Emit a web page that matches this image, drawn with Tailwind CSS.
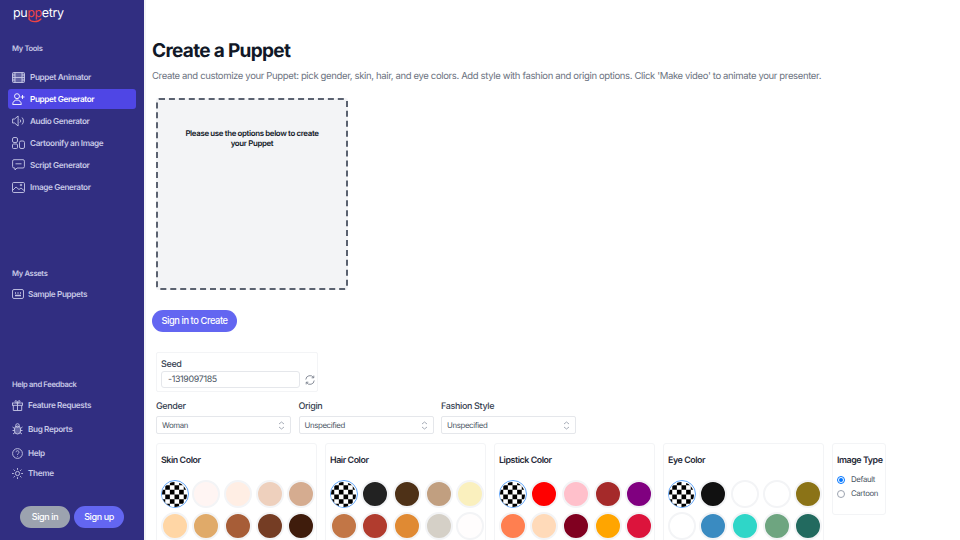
<!DOCTYPE html>
<html><head><meta charset="utf-8"><script src="https://cdn.jsdelivr.net/npm/@tailwindcss/browser@4"></script></head>
<body class="m-0 bg-white">
<div class="w-[960px] h-[540px] overflow-hidden flex font-['Inter',sans-serif] [text-rendering:geometricPrecision]">
<aside class="w-[144px] h-[540px] shrink-0 bg-[#312e81] text-[#c7c8e6] flex flex-col relative">
  <div class="pl-[13px] pt-[5px] h-[37px] relative text-white text-[12.500px] tracking-[-0.03em] leading-[18px] font-normal">pu<span class="text-[#ef4444]">pp</span>etry
    <svg class="absolute left-[28px] top-[18px]" width="14" height="5" viewBox="0 0 14 5" fill="none"><path d="M1 1c2 3.500 9 3.500 12 0" stroke="#ef4444" stroke-width="1.200" stroke-linecap="round"/></svg>
  </div>
  <div class="pl-[12px] text-[7.600px] tracking-[-0.045em] leading-[10px] font-semibold h-[19px] mt-[7px]">My Tools</div>
  <nav class="mt-[4px] px-[8px] flex flex-col gap-[2px] text-[8.200px] tracking-[-0.045em] font-semibold">
    <a class="h-[20px] flex items-center gap-[5px] pl-[4px]"><svg width="13" height="11" viewBox="0 0 13 11" fill="none" stroke="currentColor" stroke-width=".9"><rect x=".5" y=".5" width="12" height="10" rx="1" fill="currentColor" fill-opacity=".35"/><path d="M3 .5v10M10 .5v10M.5 5.500h12M.5 3h2.500M.5 8h2.500M10 3h2.500M10 8h2.500"/></svg>Puppet Animator</a>
    <a class="h-[20px] flex items-center gap-[5px] pl-[4px] rounded-[3px] bg-[#4f46e5] text-white"><svg width="13" height="12" viewBox="0 0 13 12" fill="none" stroke="currentColor" stroke-width=".9"><circle cx="5" cy="3.200" r="2.500"/><path d="M.7 11.500c0-6 8.600-6 8.600 0zM10.500 2v4M8.500 4h4"/></svg>Puppet Generator</a>
    <a class="h-[20px] flex items-center gap-[5px] pl-[4px]"><svg width="13" height="12" viewBox="0 0 13 12" fill="none" stroke="currentColor" stroke-width=".9"><path d="M.6 4v4h2l3.500 3V1L2.600 4zM8 4.500a2 2 0 0 1 0 3M10 2.500a5 5 0 0 1 0 7"/></svg>Audio Generator</a>
    <a class="h-[20px] flex items-center gap-[5px] pl-[4px]"><svg width="13" height="12" viewBox="0 0 13 12" fill="none" stroke="currentColor" stroke-width=".9"><rect x=".5" y=".5" width="5" height="5" rx="1.500"/><rect x=".5" y="7" width="5" height="4.500" rx="1"/><rect x="7.500" y="4" width="5" height="7.500" rx="1.500"/></svg>Cartoonify an Image</a>
    <a class="h-[20px] flex items-center gap-[5px] pl-[4px]"><svg width="13" height="12" viewBox="0 0 13 12" fill="none" stroke="currentColor" stroke-width=".9"><path d="M2 .7h9a1.400 1.400 0 0 1 1.400 1.400v5.500A1.400 1.400 0 0 1 11 9H5l-2 2V9H2A1.400 1.400 0 0 1 .6 7.600V2.100A1.400 1.400 0 0 1 2 .7z"/><path d="M3.500 4.800h6"/></svg>Script Generator</a>
    <a class="h-[20px] flex items-center gap-[5px] pl-[4px]"><svg width="13" height="11" viewBox="0 0 13 11" fill="none" stroke="currentColor" stroke-width=".9"><rect x=".5" y=".5" width="12" height="10" rx="1.200"/><path d="M1 8l3-3 3 2.500 2-1.500 3 2.500"/><circle cx="9" cy="3" r=".8"/></svg>Image Generator</a>
  </nav>
  <div class="pl-[12px] text-[7.600px] tracking-[-0.045em] leading-[10px] font-semibold mt-[72px]">My Assets</div>
  <a class="ml-[12px] mt-[8px] flex items-center gap-[4px] h-[14px] text-[8.200px] tracking-[-0.045em] font-semibold"><svg width="12" height="10" viewBox="0 0 12 10" fill="none" stroke="currentColor" stroke-width=".9"><rect x=".5" y=".5" width="11" height="9" rx="1.500"/><path d="M3 4h1M5.500 4h1M8 4h1M3 6.500h6" stroke-width="1.400"/></svg>Sample Puppets</a>
  <div class="pl-[12px] text-[7.600px] tracking-[-0.045em] leading-[10px] font-semibold mt-[79px]">Help and Feedback</div>
  <div class="mt-[8px] ml-[12px] flex flex-col gap-[10px] text-[8.200px] tracking-[-0.045em] font-semibold">
    <a class="flex items-center gap-[5px] h-[14px]"><svg width="11" height="11" viewBox="0 0 11 11" fill="none" stroke="currentColor" stroke-width=".9"><rect x=".5" y="3" width="10" height="2.300"/><path d="M1.300 5.300v5.200h8.400V5.300M5.500 3v7.500M5.500 3C3 3 2.300 .6 3.800.6S5.500 3 5.500 3s.2-2.400 1.700-2.400S8 3 5.500 3z"/></svg>Feature Requests</a>
    <a class="flex items-center gap-[5px] h-[14px]"><svg width="11" height="12" viewBox="0 0 11 12" fill="none" stroke="currentColor" stroke-width=".9"><rect x="2.500" y="3" width="6" height="8" rx="3" fill="currentColor" fill-opacity=".35"/><circle cx="5.500" cy="2.500" r="1.800"/><path d="M.5 4l2 1.500M10.500 4l-2 1.500M.5 7.500h2M10.500 7.500h-2M1 11l2-1.500M10 11L8 9.500"/></svg>Bug Reports</a>
    <a class="flex items-center gap-[5px] h-[14px]"><svg width="11" height="11" viewBox="0 0 11 11" fill="none" stroke="currentColor" stroke-width=".9"><circle cx="5.500" cy="5.500" r="4.900"/><path d="M4 4.200a1.500 1.500 0 1 1 2.300 1.300c-.6.400-.8.700-.8 1.300M5.500 8v.6"/></svg>Help</a>
    <a class="flex items-center gap-[5px] h-[14px] mt-[-4px]"><svg width="11" height="11" viewBox="0 0 11 11" fill="none" stroke="currentColor" stroke-width=".9"><circle cx="5.500" cy="5.500" r="2.100"/><path d="M5.500 0v1.800M5.500 9.200V11M0 5.500h1.800M9.200 5.500H11M1.600 1.600l1.300 1.300M8.100 8.100l1.300 1.300M1.600 9.400l1.300-1.300M8.100 2.900l1.300-1.300"/></svg>Theme</a>
  </div>
  <div class="absolute left-[20px] top-[506px] flex gap-[4px] text-[9px] tracking-[-0.045em] font-medium text-white">
    <button class="w-[50px] h-[22px] rounded-full bg-[#9ca3af]">Sign in</button>
    <button class="w-[50px] h-[22px] rounded-full bg-[#6366f1]">Sign up</button>
  </div>
</aside>
<main class="flex-1 bg-white border-l-2 border-[#f3f4f6] pl-[6px] overflow-hidden">
  <h1 class="mt-[38px] text-[19px] tracking-[-0.67px] leading-[26px] font-bold text-[#111827]">Create a Puppet</h1>
  <p class="mt-[5px] text-[9.500px] tracking-[-0.35px] leading-[15px] text-[#6b7280]">Create and customize your Puppet: pick gender, skin, hair, and eye colors. Add style with fashion and origin options. Click 'Make video' to animate your presenter.</p>
  <div class="ml-[4px] mt-[14px] w-[192px] h-[192px] bg-[#f3f4f6] border-2 border-dashed border-[#5b6270] rounded-[3px] pt-[28px] px-[24px] text-center text-[7.900px] tracking-[-0.045em] leading-[10px] font-semibold text-[#111827]">Please use the options below to create your Puppet</div>
  <button class="block mt-[20px] w-[85px] h-[22px] rounded-full bg-[#6366f1] text-white text-[9.300px] tracking-[-0.045em] font-medium">Sign in to Create</button>
  <div class="ml-[4px] mt-[20px] w-[162px] h-[40px] border border-[#f3f4f6] rounded-[2px] pl-[4px] pt-[6px] text-[#374151]">
    <div class="text-[9px] tracking-[-0.04em] leading-[11px] font-medium">Seed</div>
    <div class="mt-[1px] flex items-center gap-[5px]">
      <div class="w-[139px] h-[17px] border border-[#e5e7eb] rounded-[3px] pl-[6px] text-[8.900px] tracking-[-0.04em] leading-[15px] text-[#4b5563]">-1319097185</div>
      <svg width="10" height="10" viewBox="0 0 10 10" fill="none" stroke="#6b7280" stroke-width=".8"><path d="M.8 4.500A4.200 4.200 0 0 1 8.500 2.500M9.200 5.500A4.200 4.200 0 0 1 1.500 7.500M8.800.6v2.200H6.600M1.200 9.400V7.200h2.200"/></svg>
    </div>
  </div>
  <div class="ml-[4px] mt-[9px] flex gap-[7.500px]">
    <div class="w-[135px]"><div class="text-[9px] tracking-[-0.04em] leading-[12px] font-medium text-[#374151]">Gender</div><div class="mt-[3px] h-[18px] border border-[#e5e7eb] rounded-[2px] flex items-center justify-between px-[5px] pt-[1px] text-[7.800px] tracking-[-0.045em] text-[#4b5563]">Woman<svg width="7" height="9" viewBox="0 0 7 9" fill="none" stroke="#9ca3af" stroke-width=".9"><path d="M1 3l2.500-2L6 3M1 6l2.500 2L6 6"/></svg></div></div>
    <div class="w-[135px]"><div class="text-[9px] tracking-[-0.04em] leading-[12px] font-medium text-[#374151]">Origin</div><div class="mt-[3px] h-[18px] border border-[#e5e7eb] rounded-[2px] flex items-center justify-between px-[5px] pt-[1px] text-[7.800px] tracking-[-0.045em] text-[#4b5563]">Unspecified<svg width="7" height="9" viewBox="0 0 7 9" fill="none" stroke="#9ca3af" stroke-width=".9"><path d="M1 3l2.500-2L6 3M1 6l2.500 2L6 6"/></svg></div></div>
    <div class="w-[135px]"><div class="text-[9px] tracking-[-0.04em] leading-[12px] font-medium text-[#374151]">Fashion Style</div><div class="mt-[3px] h-[18px] border border-[#e5e7eb] rounded-[2px] flex items-center justify-between px-[5px] pt-[1px] text-[7.800px] tracking-[-0.045em] text-[#4b5563]">Unspecified<svg width="7" height="9" viewBox="0 0 7 9" fill="none" stroke="#9ca3af" stroke-width=".9"><path d="M1 3l2.500-2L6 3M1 6l2.500 2L6 6"/></svg></div></div>
  </div>
  <div class="ml-[4px] mt-[9px] flex gap-[8.500px] items-start" id="cards">
    <div class="w-[160.500px] h-[110px] border border-[#f3f4f6] rounded-[3px] px-[2px]">
      <div class="pl-[2px] pt-[11px] h-[36px] text-[8.900px] tracking-[-0.05em] leading-[12px] font-semibold text-[#1f2937]">Skin Color</div>
      <div class="grid grid-cols-5 gap-y-[4px] justify-items-center w-[158px]">
        <div class="w-[28px] h-[28px] rounded-full border-[1.500px] border-[#60a5fa] bg-white p-[.5px]"><svg class="w-full h-full rounded-full" viewBox=".3 .3 5.400 5.400"><rect width="6" height="6" fill="#fff"/><path d="M0 0h1v1H0zM2 0h1v1H2zM4 0h1v1H4zM1 1h1v1H1zM3 1h1v1H3zM5 1h1v1H5zM0 2h1v1H0zM2 2h1v1H2zM4 2h1v1H4zM1 3h1v1H1zM3 3h1v1H3zM5 3h1v1H5zM0 4h1v1H0zM2 4h1v1H2zM4 4h1v1H4zM1 5h1v1H1zM3 5h1v1H3zM5 5h1v1H5z" fill="#000"/></svg></div>
        <div class="w-[28px] h-[28px] rounded-full border-2 border-[#f3f4f6] bg-[#fff5f3]"></div>
        <div class="w-[28px] h-[28px] rounded-full border-2 border-[#f3f4f6] bg-[#ffeee4]"></div>
        <div class="w-[28px] h-[28px] rounded-full border-2 border-[#f3f4f6] bg-[#eed0bd]"></div>
        <div class="w-[28px] h-[28px] rounded-full border-2 border-[#f3f4f6] bg-[#d5ac90]"></div>
        <div class="w-[28px] h-[28px] rounded-full border-2 border-[#f3f4f6] bg-[#ffd6a5]"></div>
        <div class="w-[28px] h-[28px] rounded-full border-2 border-[#f3f4f6] bg-[#e0aa69]"></div>
        <div class="w-[28px] h-[28px] rounded-full border-2 border-[#f3f4f6] bg-[#a75d37]"></div>
        <div class="w-[28px] h-[28px] rounded-full border-2 border-[#f3f4f6] bg-[#753d24]"></div>
        <div class="w-[28px] h-[28px] rounded-full border-2 border-[#f3f4f6] bg-[#3f1c0c]"></div>
      </div>
    </div>
    <div class="w-[160.500px] h-[110px] border border-[#f3f4f6] rounded-[3px] px-[2px]">
      <div class="pl-[2px] pt-[11px] h-[36px] text-[8.900px] tracking-[-0.05em] leading-[12px] font-semibold text-[#1f2937]">Hair Color</div>
      <div class="grid grid-cols-5 gap-y-[4px] justify-items-center w-[158px]">
        <div class="w-[28px] h-[28px] rounded-full border-[1.500px] border-[#60a5fa] bg-white p-[.5px]"><svg class="w-full h-full rounded-full" viewBox=".3 .3 5.400 5.400"><rect width="6" height="6" fill="#fff"/><path d="M0 0h1v1H0zM2 0h1v1H2zM4 0h1v1H4zM1 1h1v1H1zM3 1h1v1H3zM5 1h1v1H5zM0 2h1v1H0zM2 2h1v1H2zM4 2h1v1H4zM1 3h1v1H1zM3 3h1v1H3zM5 3h1v1H5zM0 4h1v1H0zM2 4h1v1H2zM4 4h1v1H4zM1 5h1v1H1zM3 5h1v1H3zM5 5h1v1H5z" fill="#000"/></svg></div>
        <div class="w-[28px] h-[28px] rounded-full border-2 border-[#f3f4f6] bg-[#222222]"></div>
        <div class="w-[28px] h-[28px] rounded-full border-2 border-[#f3f4f6] bg-[#4e3117]"></div>
        <div class="w-[28px] h-[28px] rounded-full border-2 border-[#f3f4f6] bg-[#c19f80]"></div>
        <div class="w-[28px] h-[28px] rounded-full border-2 border-[#f3f4f6] bg-[#faf0be]"></div>
        <div class="w-[28px] h-[28px] rounded-full border-2 border-[#f3f4f6] bg-[#c27646]"></div>
        <div class="w-[28px] h-[28px] rounded-full border-2 border-[#f3f4f6] bg-[#b13c2e]"></div>
        <div class="w-[28px] h-[28px] rounded-full border-2 border-[#f3f4f6] bg-[#e08a33]"></div>
        <div class="w-[28px] h-[28px] rounded-full border-2 border-[#f3f4f6] bg-[#d5d0c7]"></div>
        <div class="w-[28px] h-[28px] rounded-full border-2 border-[#f3f4f6] bg-[#fffdfd]"></div>
      </div>
    </div>
    <div class="w-[160.500px] h-[110px] border border-[#f3f4f6] rounded-[3px] px-[2px]">
      <div class="pl-[2px] pt-[11px] h-[36px] text-[8.900px] tracking-[-0.05em] leading-[12px] font-semibold text-[#1f2937]">Lipstick Color</div>
      <div class="grid grid-cols-5 gap-y-[4px] justify-items-center w-[158px]">
        <div class="w-[28px] h-[28px] rounded-full border-[1.500px] border-[#60a5fa] bg-white p-[.5px]"><svg class="w-full h-full rounded-full" viewBox=".3 .3 5.400 5.400"><rect width="6" height="6" fill="#fff"/><path d="M0 0h1v1H0zM2 0h1v1H2zM4 0h1v1H4zM1 1h1v1H1zM3 1h1v1H3zM5 1h1v1H5zM0 2h1v1H0zM2 2h1v1H2zM4 2h1v1H4zM1 3h1v1H1zM3 3h1v1H3zM5 3h1v1H5zM0 4h1v1H0zM2 4h1v1H2zM4 4h1v1H4zM1 5h1v1H1zM3 5h1v1H3zM5 5h1v1H5z" fill="#000"/></svg></div>
        <div class="w-[28px] h-[28px] rounded-full border-2 border-[#f3f4f6] bg-[#ff0000]"></div>
        <div class="w-[28px] h-[28px] rounded-full border-2 border-[#f3f4f6] bg-[#ffc0cb]"></div>
        <div class="w-[28px] h-[28px] rounded-full border-2 border-[#f3f4f6] bg-[#a52a2a]"></div>
        <div class="w-[28px] h-[28px] rounded-full border-2 border-[#f3f4f6] bg-[#800080]"></div>
        <div class="w-[28px] h-[28px] rounded-full border-2 border-[#f3f4f6] bg-[#ff7f50]"></div>
        <div class="w-[28px] h-[28px] rounded-full border-2 border-[#f3f4f6] bg-[#ffdab9]"></div>
        <div class="w-[28px] h-[28px] rounded-full border-2 border-[#f3f4f6] bg-[#800020]"></div>
        <div class="w-[28px] h-[28px] rounded-full border-2 border-[#f3f4f6] bg-[#ffa500]"></div>
        <div class="w-[28px] h-[28px] rounded-full border-2 border-[#f3f4f6] bg-[#dc143c]"></div>
      </div>
    </div>
    <div class="w-[160.500px] h-[110px] border border-[#f3f4f6] rounded-[3px] px-[2px]">
      <div class="pl-[2px] pt-[11px] h-[36px] text-[8.900px] tracking-[-0.05em] leading-[12px] font-semibold text-[#1f2937]">Eye Color</div>
      <div class="grid grid-cols-5 gap-y-[4px] justify-items-center w-[158px]">
        <div class="w-[28px] h-[28px] rounded-full border-[1.500px] border-[#60a5fa] bg-white p-[.5px]"><svg class="w-full h-full rounded-full" viewBox=".3 .3 5.400 5.400"><rect width="6" height="6" fill="#fff"/><path d="M0 0h1v1H0zM2 0h1v1H2zM4 0h1v1H4zM1 1h1v1H1zM3 1h1v1H3zM5 1h1v1H5zM0 2h1v1H0zM2 2h1v1H2zM4 2h1v1H4zM1 3h1v1H1zM3 3h1v1H3zM5 3h1v1H5zM0 4h1v1H0zM2 4h1v1H2zM4 4h1v1H4zM1 5h1v1H1zM3 5h1v1H3zM5 5h1v1H5z" fill="#000"/></svg></div>
        <div class="w-[28px] h-[28px] rounded-full border-2 border-[#f3f4f6] bg-[#111111]"></div>
        <div class="w-[28px] h-[28px] rounded-full border-2 border-[#f3f4f6] bg-white"></div>
        <div class="w-[28px] h-[28px] rounded-full border-2 border-[#f3f4f6] bg-white"></div>
        <div class="w-[28px] h-[28px] rounded-full border-2 border-[#f3f4f6] bg-[#8b7317]"></div>
        <div class="w-[28px] h-[28px] rounded-full border-2 border-[#f3f4f6] bg-white"></div>
        <div class="w-[28px] h-[28px] rounded-full border-2 border-[#f3f4f6] bg-[#3a8bc1]"></div>
        <div class="w-[28px] h-[28px] rounded-full border-2 border-[#f3f4f6] bg-[#2fd6c8]"></div>
        <div class="w-[28px] h-[28px] rounded-full border-2 border-[#f3f4f6] bg-[#6ea580]"></div>
        <div class="w-[28px] h-[28px] rounded-full border-2 border-[#f3f4f6] bg-[#226a5f]"></div>
      </div>
    </div>
    <div class="w-[54px] h-[72px] border border-[#f3f4f6] rounded-[3px] pl-[4px] shrink-0">
      <div class="pt-[11px] text-[8.900px] tracking-[-0.05em] leading-[12px] font-semibold text-[#1f2937] whitespace-nowrap">Image Type</div>
      <div class="mt-[6px] flex items-center gap-[6px] h-[14px] text-[7.800px] tracking-[-0.045em] text-[#4b5563]"><span class="w-[8px] h-[8px] rounded-full border border-[#0075ff] flex items-center justify-center"><span class="w-[4px] h-[4px] rounded-full bg-[#0075ff]"></span></span>Default</div>
      <div class="flex items-center gap-[6px] h-[14px] text-[7.800px] tracking-[-0.045em] text-[#4b5563]"><span class="w-[8px] h-[8px] rounded-full border border-[#9ca3af]"></span>Cartoon</div>
    </div>
  </div>
</main>
</div>
</body></html>
